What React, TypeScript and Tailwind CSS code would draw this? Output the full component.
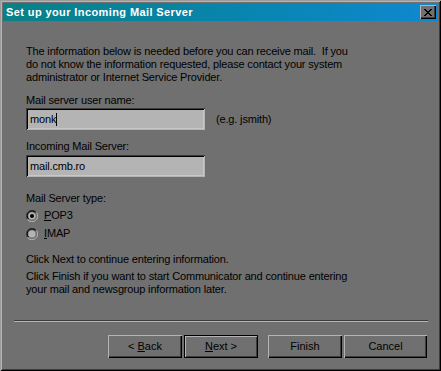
import React from "react";

const font = { fontFamily: '"Liberation Sans", Arial, sans-serif' };

function Radio({ checked }: { checked?: boolean }) {
  return (
    <svg width="12" height="12" viewBox="0 0 12 12" className="shrink-0">
      <path d="M10.5 2.5 A5.5 5.5 0 0 0 1.5 9.5" stroke="#3a3a3a" fill="none" />
      <path d="M9.5 2.5 A4.5 4.5 0 0 0 2.5 9" stroke="#000" fill="none" />
      <path d="M1.5 9.5 A5.5 5.5 0 0 0 10.5 2.5" stroke="#b8b8b8" fill="none" />
      <circle cx="6" cy="6" r="3.6" fill="#b4b4b4" />
      {checked && <circle cx="6" cy="6" r="2" fill="#000" />}
    </svg>
  );
}

function Btn({ label, u, rest, wide, def }: { label?: string; u?: string; rest?: string; wide?: boolean; def?: boolean }) {
  return (
    <button
      className={`h-[23px] ${wide ? "w-[83px]" : "w-[74px]"} bg-[#707070] text-[11px] text-black flex items-center justify-center ${
        def
          ? "border border-black shadow-[inset_1px_1px_#b4b4b4,inset_-1px_-1px_#3c3c3c]"
          : "shadow-[inset_1px_1px_#b4b4b4,inset_-1px_-1px_#000,inset_-2px_-2px_#3c3c3c]"
      }`}
    >
      <span className="whitespace-pre">
        {label}
        {u && <span className="underline">{u}</span>}
        {rest}
      </span>
    </button>
  );
}

export default function App() {
  return (
    <div
      className="w-[441px] h-[371px] bg-[#707070] p-[3px] flex flex-col text-black shadow-[inset_1px_1px_#9c9c9c,inset_-1px_-1px_#000,inset_2px_2px_#b4b4b4,inset_-2px_-2px_#3c3c3c]"
      style={font}
    >
      {/* title bar */}
      <div className="h-[18px] bg-gradient-to-r from-[#0a8086] to-[#1088d0] flex items-center justify-between pl-[3px] pr-[2px]">
        <span className="text-white font-bold text-[11px] tracking-[0.4px]">Set up your Incoming Mail Server</span>
        <div className="w-[16px] h-[14px] bg-[#707070] flex items-center justify-center shadow-[inset_1px_1px_#b4b4b4,inset_-1px_-1px_#000,inset_-2px_-2px_#3c3c3c]">
          <svg width="8" height="7" viewBox="0 0 8 7">
            <path d="M0 0h2v1H0zM6 0h2v1H6zM1 1h2v1H1zM5 1h2v1H5zM2 2h4v1H2zM3 3h2v1H3zM2 4h4v1H2zM1 5h2v1H1zM5 5h2v1H5zM0 6h2v1H0zM6 6h2v1H6z" fill="#000" />
          </svg>
        </div>
      </div>

      <div className="flex-1 flex flex-col pl-[23px] text-[11px] leading-[13px] tracking-[-0.16px]">
        <p className="mt-[24px] w-[328px]">
          The information below is needed before you can receive mail.&nbsp; If you do not know the information requested, please contact your system administrator or Internet Service Provider.
        </p>

        <div className="mt-[10px]">Mail server user name:</div>
        <div className="mt-[1px] flex items-center">
          <div className="w-[179px] h-[22px] bg-[#b4b4b4] pl-[4px] flex items-center shadow-[inset_1px_1px_#3c3c3c,inset_-1px_-1px_#b4b4b4,inset_2px_2px_#000,inset_-2px_-2px_#c8c8c8]">
            monk<span className="w-px h-[13px] bg-black" />
          </div>
          <span className="ml-[11px]">(e.g. jsmith)</span>
        </div>

        <div className="mt-[10px]">Incoming Mail Server:</div>
        <div className="mt-[2px] w-[179px] h-[22px] bg-[#b4b4b4] pl-[4px] flex items-center shadow-[inset_1px_1px_#3c3c3c,inset_-1px_-1px_#b4b4b4,inset_2px_2px_#000,inset_-2px_-2px_#c8c8c8]">
          mail.cmb.ro
        </div>

        <div className="mt-[15px]">Mail Server type:</div>
        <div className="mt-[4px] flex flex-col gap-[5px]">
          <div className="flex items-center gap-[6px] h-[13px]">
            <Radio checked />
            <span>
              <span className="underline">P</span>OP3
            </span>
          </div>
          <div className="flex items-center gap-[6px] h-[13px]">
            <Radio />
            <span>
              <span className="underline">I</span>MAP
            </span>
          </div>
        </div>

        <div className="mt-[13px]">Click Next to continue entering information.</div>
        <p className="mt-[4px] w-[328px]">
          Click Finish if you want to start Communicator and continue entering your mail and newsgroup information later.
        </p>
      </div>

      <div className="ml-[11px] mr-[10px] h-[2px] border-t border-[#3c3c3c] border-b border-b-[#b4b4b4]" />

      <div className="flex justify-end pr-[11px] mt-[13px] mb-[10px]">
        <Btn label="< " u="B" rest="ack" />
        <div className="ml-[2px]">
          <Btn u="N" rest="ext >" def />
        </div>
        <div className="ml-[10px]">
          <Btn label="Finish" />
        </div>
        <div className="ml-[2px]">
          <Btn label="Cancel" wide />
        </div>
      </div>
    </div>
  );
}
